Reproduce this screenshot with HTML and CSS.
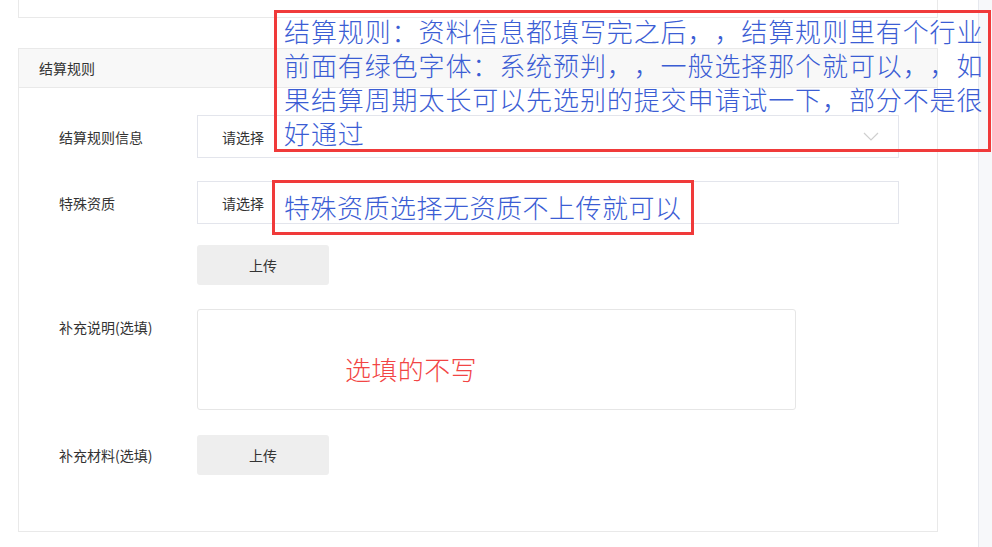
FILE: index.html
```html
<!DOCTYPE html>
<html lang="zh-CN">
<head>
<meta charset="utf-8">
<title>结算规则</title>
<link rel="stylesheet" href="styles.css">
</head>
<body>
<div class="page">
  <div class="main">
    <div class="top-card"></div>
    <section class="card">
      <div class="card-head">结算规则</div>
      <div class="card-body">
        <div class="row">
          <div class="label">结算规则信息</div>
          <div class="select">
            <span class="placeholder">请选择</span>
            <svg class="chev" width="16" height="9" viewBox="0 0 16 9"><path d="M1 1 L8 8 L15 1" fill="none" stroke="#cfcfcf" stroke-width="1.2"/></svg>
          </div>
        </div>
        <div class="row row2">
          <div class="label">特殊资质</div>
          <div class="select">
            <span class="placeholder">请选择</span>
          </div>
        </div>
        <div class="row row3">
          <div class="label"></div>
          <button class="btn">上传</button>
        </div>
        <div class="row row4 top">
          <div class="label label-top">补充说明(选填)</div>
          <div class="textarea">
            <span class="note-red">选填的不写</span>
          </div>
        </div>
        <div class="row row5">
          <div class="label">补充材料(选填)</div>
          <button class="btn">上传</button>
        </div>
      </div>
    </section>
  </div>
  <div class="side"></div>

  <div class="note note1">
    <span class="ln">结算规则：资料信息都填写完之后，，结算规则里有个行业</span>
    <span class="ln">前面有绿色字体：系统预判，，一般选择那个就可以，，如</span>
    <span class="ln">果结算周期太长可以先选别的提交申请试一下，部分不是很</span>
    <span class="ln">好通过</span>
  </div>
  <div class="note note2">
    <span class="ln">特殊资质选择无资质不上传就可以</span>
  </div>
</div>
</body>
</html>
```

FILE: styles.css
```css
* { box-sizing: border-box; }
html, body { margin: 0; padding: 0; background: #fff; }
body {
  font-family: "Noto Sans CJK SC", "Microsoft YaHei", sans-serif;
  font-size: 14px;
  color: #333;
  width: 992px;
  height: 547px;
  overflow: hidden;
  text-spacing-trim: space-all;
}
.page {
  position: relative;
  display: flex;
  height: 547px;
}
.main {
  width: 978px;
  padding-left: 18px;
  padding-right: 40px;
}
.side {
  width: 14px;
  border-left: 1px solid #e6e8ee;
  background: #f7f8fa;
}
.top-card {
  height: 18px;
  border: 1px solid #e9e9e9;
  border-top: none;
}
.card {
  margin-top: 30px;
  border: 1px solid #e9e9e9;
  height: 484px;
}
.card-head {
  height: 39px;
  background: #f8f8f8;
  border-bottom: 1px solid #e9e9e9;
  padding-left: 20px;
  display: flex;
  align-items: center;
  font-size: 14px;
  color: #333;
}
.card-body {
  padding: 27px 0 0 40px;
}
.row {
  display: flex;
  align-items: center;
}
.row.top { align-items: flex-start; }
.row2 { margin-top: 23px; }
.row3 { margin-top: 21px; }
.row4 { margin-top: 24px; }
.row5 { margin-top: 25px; }
.label {
  width: 138px;
  flex: none;
  font-size: 14px;
  color: #333;
}
.label-top { padding-top: 8px; }
.select {
  width: 702px;
  height: 43px;
  border: 1px solid #e3e5ec;
  display: flex;
  align-items: center;
  justify-content: space-between;
  padding: 0 19px 0 24px;
}
.placeholder { font-size: 14px; color: #333; }
.chev { display: block; }
.btn {
  width: 132px;
  height: 40px;
  border: none;
  border-radius: 3px;
  background: #eeeeee;
  font-family: inherit;
  font-size: 14px;
  color: #333;
  padding: 0;
}
.textarea {
  width: 599px;
  height: 101px;
  border: 1px solid #e6e6e6;
  border-radius: 3px;
  padding: 44px 0 0 147px;
}
.note-red {
  display: block;
  font-size: 26px;
  font-weight: 300;
  line-height: 30px;
  color: #f24545;
  letter-spacing: 0.4px;
  white-space: nowrap;
}
.note {
  position: absolute;
  border: 3px solid #f03a3a;
  color: #3b5dd4;
  font-size: 26px;
  font-weight: 300;
  background: transparent;
}
.note .ln {
  display: block;
  white-space: nowrap;
}
.note1 {
  left: 274px;
  top: 10px;
  width: 717px;
  height: 142px;
  padding: 1px 0 0 7px;
  line-height: 34px;
  letter-spacing: 0.9px;
}
.note2 {
  left: 272px;
  top: 180px;
  width: 422px;
  height: 55px;
  padding: 7px 0 0 9px;
  line-height: 34px;
  letter-spacing: 0.5px;
}
```
